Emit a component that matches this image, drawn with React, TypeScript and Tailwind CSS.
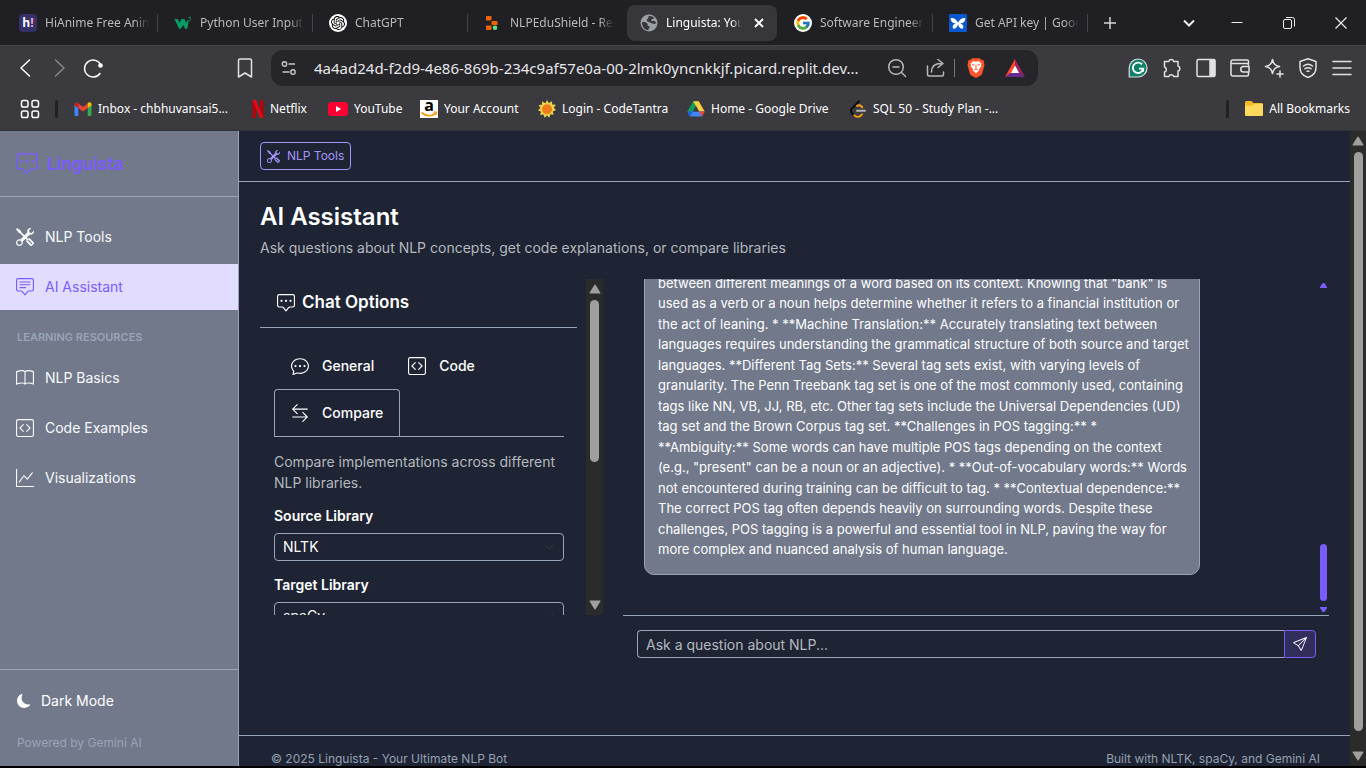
import type { ReactNode } from "react";
import {
  BsArrowLeftRight,
  BsBook,
  BsChatDots,
  BsChatSquareDots,
  BsChatSquareText,
  BsCodeSquare,
  BsGraphUp,
  BsMoonFill,
  BsSend,
  BsTools,
} from "react-icons/bs";
import { FcGoogle } from "react-icons/fc";
import { SiOpenai } from "react-icons/si";

/* ---------- browser icons ---------- */

function HiAnimeIcon() {
  return (
    <span className="flex h-[18px] w-[18px] items-center justify-center rounded bg-[#35306a] font-['Open_Sans',sans-serif] text-xs leading-none font-bold text-white">
      h<span className="text-[#f5a3d8]">!</span>
    </span>
  );
}

function W3Icon() {
  return (
    <svg viewBox="0 0 20 18" className="h-[18px] w-5" fill="none">
      <path d="M0.4 4.5h4l1.8 4.2 2-4.2h3.600l1.600 4.400 1.200-2.600h1.800l-1.600 9h-2.400l-2.200-4.200-2.600 4.200H5.600z" fill="#0a9b62" />
      <path d="M16 2.600h2.600l-1.200 1.600c1.400.1 1.600 2.200-.2 2.400-.6 0-1-.2-1.300-.6" stroke="#0a9b62" strokeWidth="0.9" />
    </svg>
  );
}

function ChatGptIcon() {
  return (
    <span className="flex h-[18px] w-[18px] items-center justify-center rounded-full bg-white text-black">
      <SiOpenai size={14} />
    </span>
  );
}

function ReplitIcon() {
  return (
    <svg viewBox="0 0 18 18" className="h-[18px] w-[18px]">
      <rect x="2" y="2" width="5.5" height="4.5" rx="0.8" fill="#f26207" />
      <rect x="7.5" y="7" width="6" height="4" rx="0.8" fill="#f26207" />
      <rect x="2" y="11.5" width="5.5" height="4.5" rx="0.8" fill="#f26207" />
      <circle cx="11" cy="13.7" r="2.3" fill="#5fe08a" />
    </svg>
  );
}

function GlobeIcon() {
  return (
    <svg viewBox="0 0 18 18" className="h-[18px] w-[18px]">
      <circle cx="9" cy="9" r="8.500" fill="#9aa0a6" />
      <path
        d="M2 8.200c2.400-.4 4.600.2 5.400 1.600.6 1-.2 2.300 1.200 2.400 1.800.1 1.400 1.600 0 2.400l-.2 1.600C4.800 16 2 13 2 8.200zM8.400 2.200c2.400-.6 4.400.2 5.800 1.800-.6 1.600-2.400.6-3 1.800-.7 1.200 1 1.400 2.400 1.300 1.200 0 2 .6 2.400 1.900-1.400 2-3.600.6-5.200-.2C9.200 8 6.600 7.600 6.800 5.900c.2-1.300 2.200-1.200 1.600-3.700z"
        fill="#37363b"
      />
    </svg>
  );
}

function GoogleIcon() {
  return (
    <span className="flex h-[18px] w-[18px] items-center justify-center rounded-full bg-white">
      <FcGoogle size={16} />
    </span>
  );
}

function GeminiDevIcon() {
  return (
    <svg viewBox="0 0 18 18" className="h-[18px] w-[18px]">
      <rect width="18" height="18" rx="1" fill="#0b57d0" />
      <path d="M9 8.600C7.500 5 4.500 3.500 1.800 4c-.2 3.400 2 5.600 5.200 5.400-3 .6-4 2.600-3 5.200 3 .5 4.600-1.600 5-4.600.4 3 2 5.100 5 4.600 1-2.600 0-4.600-3-5.200 3.200.2 5.400-2 5.200-5.400C13.500 3.500 10.500 5 9 8.600z" fill="#fff" />
    </svg>
  );
}

function GmailIcon() {
  return (
    <svg viewBox="0 0 18 14" className="h-[14px] w-[18px]">
      <path d="M0.500 2.500v10.200c0 .7.500 1.200 1.200 1.200h2.600V6z" fill="#4285f4" />
      <path d="M17.500 2.500v10.200c0 .7-.5 1.200-1.200 1.200h-2.600V6z" fill="#34a853" />
      <path d="M4.300 6v-4.600L9 5l4.700-3.600V6L9 9.600z" fill="#ea4335" />
      <path d="M0.500 2.400C.5.300 2.700-.4 4.300 1.100V6L.5 3.400z" fill="#c5221f" />
      <path d="M17.500 2.400c0-2.100-2.200-2.800-3.800-1.300V6l3.800-2.600z" fill="#fbbc04" />
    </svg>
  );
}

function NetflixIcon() {
  return (
    <svg viewBox="0 0 12 18" className="h-[18px] w-3">
      <path d="M0.500 0h3.500v18l-3.500.2zM8 0h3.500v18.200L8 18z" fill="#b1060f" />
      <path d="M0.500 0H4l7.500 18.200L8 18z" fill="#e50914" />
    </svg>
  );
}

function YouTubeIcon() {
  return (
    <svg viewBox="0 0 20 14" className="h-[14px] w-5">
      <rect width="20" height="14" rx="3.500" fill="#ff0033" />
      <path d="M8 4l5.200 3L8 10z" fill="#fff" />
    </svg>
  );
}

function AmazonIcon() {
  return (
    <span className="relative flex h-[18px] w-[18px] justify-center bg-white font-['Open_Sans',sans-serif] text-base leading-[11px] font-bold text-black">
      a
      <svg viewBox="0 0 18 18" className="absolute inset-0" fill="none">
        <path d="M1.500 12.500c4.500 4 10 4 14 1" stroke="#ff9900" strokeWidth="1.800" />
        <path d="M13.500 12.200h3l-.6 3" stroke="#ff9900" strokeWidth="1.200" />
      </svg>
    </span>
  );
}

function SunIcon() {
  return (
    <svg viewBox="0 0 18 18" className="h-[18px] w-[18px]">
      <path d="M9 0l1.800 3L14 1.200l.2 3.400 3.600.2-2 3 2.200 2.200-3.200 1.400.8 3.300-3.200-.4L11.300 17.800 9 15.600l-2.400 2.200-1.200-3.200-3.300.5.9-3.300-3-1.500 2.400-2.300L.6 5l3.400-.2.100-3.600 3.200 2z" fill="#e8d44c" />
      <circle cx="9" cy="9.200" r="5" fill="#f07c1b" />
    </svg>
  );
}

function DriveIcon() {
  return (
    <svg viewBox="0 0 18 16" className="h-4 w-[18px]">
      <path d="M6.200.3h5.600L6 10.500H.3z" fill="#0f9d58" />
      <path d="M6.200.3h5.600l5.900 10.200H12z" fill="#ffcd40" />
      <path d="M.3 10.500h17.400L15 15.600H3z" fill="#4285f4" />
      <path d="M12 10.500h5.700L15 15.600z" fill="#ea4335" />
      <path d="M.3 10.500H6L3 15.600z" fill="#1967d2" />
      <path d="M9 5.300l3 5.200H6z" fill="#3b3a3f" />
    </svg>
  );
}

function LeetCodeIcon() {
  return (
    <svg viewBox="0 0 18 18" className="h-[18px] w-[18px]" fill="none" strokeWidth="2" strokeLinecap="round">
      <path d="M10 1.200L2.800 8.600c-1.200 1.200-1.200 2.800 0 4.200l1.600 1.800" stroke="#0c0c0c" />
      <path d="M5.400 15.400c1.800 1.900 4.600 1.900 6.400.2l1.200-1.200M8 6c1.400-1 3-.8 4.200.2l1 1" stroke="#ffa116" />
      <path d="M8 10.800h8" stroke="#b3b3b3" />
    </svg>
  );
}

function FolderIcon() {
  return (
    <svg viewBox="0 0 18 15" className="h-[15px] w-[18px]">
      <path d="M0 1.500C0 .7.700 0 1.500 0h5l2 2H16.500c.8 0 1.500.7 1.500 1.500v10c0 .8-.7 1.500-1.500 1.500h-15C.7 15 0 14.300 0 13.500z" fill="#f5b921" />
      <path d="M0 4.500h7.500l1.800-1.500H18v10.500c0 .8-.7 1.500-1.500 1.500h-15C.7 15 0 14.300 0 13.500z" fill="#ffd95e" />
    </svg>
  );
}

function BraveIcon() {
  return (
    <svg viewBox="0 0 18 20.500" className="h-5 w-[18px]">
      <path d="M5 .3h8l1.600 1.800 1.500-.2L17.600 4l-.5 1.500.6 1.800-2.300 8.500c-.3 1-1 1.600-2 2.300L9 20.500l-4.400-2.400c-1-.7-1.700-1.300-2-2.300L.3 7.300l.6-1.800L.4 4l1.500-2.100 1.500.2z" fill="#fb542b" />
      <path d="M9 3.800l3-.6 2.600 2.700-.5 1.300.4 1.300-2.500 3 .4 1.300-1.300.9L9 16l-2.100-2.300-1.300-.9.400-1.300-2.500-3 .4-1.300-.5-1.300L6 3.200z" fill="#fff" />
      <path d="M5 6.600l2.600.7M13 6.600l-2.600.7M9 7v4.200M7.200 11.400L9 12.400l1.800-1" stroke="#fb542b" strokeWidth="1" fill="none" />
    </svg>
  );
}

function BatIcon() {
  return (
    <svg viewBox="0 0 20 18" className="h-[18px] w-5">
      <path d="M10 0L0 18l6-4 4-7z" fill="#ff4724" />
      <path d="M10 0l10 18-6-4-4-7z" fill="#9e1f63" />
      <path d="M0 18h20l-6-4H6z" fill="#662d91" />
      <path d="M10 6.500l4.200 7.500H5.800z" fill="#fff" />
    </svg>
  );
}

function GrammarlyIcon() {
  return (
    <svg viewBox="0 0 20 20" className="h-5 w-5" fill="none">
      <path d="M10 1a9 9 0 1 1 0 18H1.200V10A9 9 0 0 1 10 1z" fill="#11806a" stroke="#d8dcdc" strokeWidth="1.200" />
      <path d="M14 6.400A5.200 5.200 0 1 0 15.200 10.600H11M15.200 10.600l-.2 3" stroke="#fff" strokeWidth="1.900" />
    </svg>
  );
}

function Line({ children }: { children: ReactNode }) {
  return (
    <svg viewBox="0 0 20 20" className="h-5 w-5" fill="none" stroke="currentColor" strokeWidth="1.500" strokeLinecap="round" strokeLinejoin="round">
      {children}
    </svg>
  );
}

/* ---------- browser chrome ---------- */

const tabs = [
  { title: "HiAnime Free Anime", icon: <HiAnimeIcon /> },
  { title: "Python User Input", icon: <W3Icon /> },
  { title: "ChatGPT", icon: <ChatGptIcon /> },
  { title: "NLPEduShield - Rep", icon: <ReplitIcon /> },
  { title: "Linguista: Your", icon: <GlobeIcon />, active: true },
  { title: "Software Engineer", icon: <GoogleIcon /> },
  { title: "Get API key | Goog", icon: <GeminiDevIcon /> },
];

function TabStrip() {
  return (
    <div className="flex h-[45px] shrink-0 items-center bg-[#201f24] pl-[3px] text-[#b9b8bc]">
      {tabs.map((tab, i) => (
        <div key={tab.title} className="flex w-[155px] shrink items-center">
          <button
            type="button"
            className={
              tab.active
                ? "ml-1 flex h-9 min-w-0 flex-1 items-center gap-2 rounded-lg bg-[#37363b] px-[13px] text-white"
                : "flex h-9 min-w-0 flex-1 items-center gap-2 pr-2 pl-4"
            }
          >
            <span className="flex w-[18px] shrink-0 justify-center">{tab.icon}</span>
            <span className="min-w-0 flex-1 overflow-hidden text-left text-xs whitespace-nowrap [mask-image:linear-gradient(to_right,black_86%,transparent)]">
              {tab.title}
            </span>
            {tab.active && (
              <svg viewBox="0 0 10 10" className="ml-1 h-[10px] w-[10px] shrink-0" stroke="#fff" strokeWidth="1.800">
                <path d="M1 1l8 8M9 1L1 9" />
              </svg>
            )}
          </button>
          <span className={i === 3 || i === 4 ? "h-[18px] w-px" : "h-[18px] w-px bg-[#45444a]"} />
        </div>
      ))}
      <button type="button" aria-label="New tab" className="ml-4 text-[#d6d5d8]">
        <svg viewBox="0 0 12 12" className="h-3 w-3" stroke="currentColor" strokeWidth="1.500">
          <path d="M6 0v12M0 6h12" />
        </svg>
      </button>
      <div className="ml-auto flex items-center gap-10 pr-[19px] text-[#ececee]">
        <button type="button" aria-label="Search tabs" className="mr-[-4px]">
          <svg viewBox="0 0 12 12" className="h-3 w-3" fill="none" stroke="currentColor" strokeWidth="2">
            <path d="M1 3.500l5 5 5-5" />
          </svg>
        </button>
        <button type="button" aria-label="Minimize">
          <svg viewBox="0 0 12 12" className="h-3 w-3" stroke="currentColor">
            <path d="M0.500 5.500h11" />
          </svg>
        </button>
        <button type="button" aria-label="Restore">
          <svg viewBox="0 0 12 12" className="h-3 w-3" fill="none" stroke="currentColor">
            <rect x="0.500" y="2.500" width="8" height="9" rx="1.500" />
            <path d="M3 .5h6.500a2 2 0 0 1 2 2V9.500" />
          </svg>
        </button>
        <button type="button" aria-label="Close">
          <svg viewBox="0 0 12 12" className="h-3 w-3" stroke="currentColor" strokeWidth="1.200">
            <path d="M.5.5l11 11M11.500.5l-11 11" />
          </svg>
        </button>
      </div>
    </div>
  );
}

function Toolbar() {
  return (
    <div className="flex h-[46px] shrink-0 items-center border-t border-[#45444a] bg-[#3b3a3f] pr-[14px] pb-px pl-4 text-[#e2e2e4]">
      <button type="button" aria-label="Back" className="text-white">
        <Line><path d="M13.500 2L5 10l8.500 8" /></Line>
      </button>
      <button type="button" aria-label="Forward" className="ml-[14px] text-[#88878c]">
        <Line><path d="M5.500 2l8.500 8-8.500 8" /></Line>
      </button>
      <button type="button" aria-label="Reload" className="ml-[13px] text-white">
        <Line>
          <path d="M17 15.500A8.500 8.500 0 1 1 17.800 7" />
          <circle cx="17.500" cy="7.500" r="1.600" fill="currentColor" />
        </Line>
      </button>
      <button type="button" aria-label="Bookmark" className="ml-[132px]">
        <Line><path d="M3.500 2.500q0-1.500 1.500-1.500h10q1.500 0 1.500 1.500v16.500l-6.500-4-6.500 4z" /></Line>
      </button>
      <div className="ml-4 flex h-9 w-[767px] items-center rounded-xl bg-[#26252a] pr-[13px] pl-[9px]">
        <svg viewBox="0 0 16 16" className="h-4 w-[18px] shrink-0" fill="none" stroke="#c7c6ca" strokeWidth="1.400">
          <circle cx="3.500" cy="4" r="2.200" />
          <path d="M7.500 4H14M1.500 12H8.500" />
          <circle cx="12" cy="12" r="2.200" />
        </svg>
        <input
          aria-label="Address"
          className="ml-4 min-w-0 flex-1 bg-transparent text-[15px] text-[#e6e6e8] outline-none"
          defaultValue="4a4ad24d-f2d9-4e86-869b-234c9af57e0a-00-2lmk0yncnkkjf.picard.replit.dev..."
        />
        <div className="flex items-center text-[#b8b7bb]">
          <Line>
            <circle cx="9" cy="9" r="7.300" />
            <path d="M6 9h6M14.500 14.500l4 4" />
          </Line>
          <span className="ml-[19px] flex">
            <Line>
              <path d="M1.500 8v8.500q0 1.500 1.500 1.500h13q1.500 0 1.500-1.500V14M5.500 14c0-5.500 3-8.500 9.500-8.500M12 1.500l5 4-5 4" />
            </Line>
          </span>
          <span className="ml-2 h-[18px] w-px bg-[#77767b]" />
          <span className="ml-3"><BraveIcon /></span>
          <span className="ml-5"><BatIcon /></span>
        </div>
      </div>
      <div className="ml-auto flex items-center gap-[14px]">
        <GrammarlyIcon />
        <Line>
          <path d="M2.500 3.500h4.200a2.600 2.600 0 0 1 5 0H16V8a2.600 2.600 0 0 1 0 5v5.500h-4.300a2.600 2.600 0 0 0-4.900 0H2.500V14a2.600 2.600 0 0 0 0-5z" />
        </Line>
        <Line>
          <rect x="1" y="1.500" width="18" height="17" rx="1.500" />
          <path d="M14 2h4.500v16H14z" fill="currentColor" />
        </Line>
        <Line>
          <path d="M18.500 6V3.500q0-1.500-1.500-1.500H3Q1 2 1 4v12q0 2 2 2h14q1.500 0 1.500-1.500V14M1.200 5.500H17q1.500 0 1.500 1.500M19 8.500h-5.500a2.700 2.700 0 0 0 0 5.500H19z" />
        </Line>
        <Line>
          <path d="M8.500 1.500c1 4.500 2.500 6 7 7-4.500 1-6 2.500-7 7-1-4.500-2.500-6-7-7 4.500-1 6-2.500 7-7zM16 13v6M13 16h6" />
        </Line>
        <Line>
          <path d="M10 .8l8 2.700v6c0 5-3.500 8.500-8 10-4.500-1.500-8-5-8-10v-6zM5.500 8c2.700-2 6.300-2 9 0M7 10.700c2-1.400 4-1.400 6 0M9 13.300q1-.8 2 0" />
        </Line>
        <Line>
          <path d="M1 3.500h18M1 10h18M1 16.500h18" />
        </Line>
      </div>
    </div>
  );
}

const bookmarks = [
  { title: "Inbox - chbhuvansai5...", icon: <GmailIcon />, box: "w-[178px]" },
  { title: "Netflix", icon: <NetflixIcon />, box: "w-[76px]" },
  { title: "YouTube", icon: <YouTubeIcon />, box: "w-[92px]" },
  { title: "Your Account", icon: <AmazonIcon />, box: "w-[118px]" },
  { title: "Login - CodeTantra", icon: <SunIcon />, box: "w-[149px]" },
  { title: "Home - Google Drive", icon: <DriveIcon />, box: "w-[162px]" },
  { title: "SQL 50 - Study Plan -...", icon: <LeetCodeIcon />, box: "w-[160px]" },
];

function BookmarksBar() {
  return (
    <div className="flex h-10 shrink-0 items-center border-b border-[#323135] bg-[#3b3a3f] pr-4 pb-1 pl-5 text-xs whitespace-nowrap text-white">
      <Line>
        <rect x="1.500" y="1.500" width="6.500" height="6.500" rx="1.800" />
        <rect x="12" y="1.500" width="6.500" height="6.500" rx="1.800" />
        <rect x="1.500" y="12" width="6.500" height="6.500" rx="1.800" />
        <rect x="12" y="12" width="6.500" height="6.500" rx="1.800" />
      </Line>
      <span className="ml-[15px] h-[18px] w-[3px] rounded-full bg-[#212025]" />
      <nav className="ml-4 flex">
        {bookmarks.map((b) => (
          <a key={b.title} href="#" className={`flex items-center gap-[6px] ${b.box}`}>
            <span className="flex shrink-0 justify-center">{b.icon}</span>
            {b.title}
          </a>
        ))}
      </nav>
      <span className="ml-auto h-[18px] w-[3px] rounded-full bg-[#212025]" />
      <a href="#" className="ml-4 flex items-center gap-[6px]">
        <FolderIcon />
        All Bookmarks
      </a>
    </div>
  );
}

/* ---------- scrollbars ---------- */

function Arrow({ down = false }: { down?: boolean }) {
  return (
    <svg viewBox="0 0 12 10" className="h-[10px] w-3 shrink-0" fill="#9f9f9f">
      {down ? <path d="M1.200.5h9.600q1 0 .5 1L6.700 9q-.7 1-1.400 0L.7 1.500q-.5-1 .5-1z" /> : <path d="M1.200 9.500h9.600q1 0 .5-1L6.700 1q-.7-1-1.400 0L.7 8.500q-.5 1 .5 1z" />}
    </svg>
  );
}

/* ---------- application ---------- */

function NavItem({ icon, label, active = false }: { icon: ReactNode; label: string; active?: boolean }) {
  return (
    <a
      href="#"
      className={
        active
          ? "flex h-[46px] items-center gap-[11px] bg-[#e2dcff] pl-4 text-sm text-[#7a5cfa]"
          : "flex h-[46px] items-center gap-[11px] pl-4 text-sm text-[#f8fafc]"
      }
    >
      {icon}
      {label}
    </a>
  );
}

function Sidebar() {
  return (
    <aside className="flex w-[239px] shrink-0 flex-col border-r border-[#9aa4b8] bg-[#71798b]">
      <div className="flex h-[66px] shrink-0 items-center gap-[9px] border-b border-[#9aa4b8] pl-4 text-[#7a5cfa]">
        <BsChatSquareDots size={22} />
        <span className="text-[17px] leading-6 font-bold">Linguista</span>
      </div>
      <nav className="flex flex-1 flex-col gap-1 pt-[17px]">
        <NavItem icon={<BsTools size={18} />} label="NLP Tools" />
        <NavItem icon={<BsChatSquareText size={18} />} label="AI Assistant" active />
        <h2 className="flex h-[37px] items-end pb-[6px] pl-[17px] text-[11px] leading-4 font-semibold text-[#9aa4b8]">
          LEARNING RESOURCES
        </h2>
        <NavItem icon={<BsBook size={18} />} label="NLP Basics" />
        <NavItem icon={<BsCodeSquare size={18} />} label="Code Examples" />
        <NavItem icon={<BsGraphUp size={18} />} label="Visualizations" />
      </nav>
      <div className="flex flex-col gap-[22px] border-t border-[#9aa4b8] px-[17px] pt-[21px] pb-[13px]">
        <button type="button" className="flex items-center gap-[10px] text-sm leading-5 text-white">
          <BsMoonFill size={14} />
          Dark Mode
        </button>
        <p className="text-xs leading-5 text-[#9aa4b8]">Powered by Gemini AI</p>
      </div>
    </aside>
  );
}

function LibrarySelect({ id, label, value }: { id: string; label: string; value: string }) {
  return (
    <div className="flex flex-col gap-[7px]">
      <label htmlFor={id} className="text-sm leading-5 font-semibold text-white">
        {label}
      </label>
      <div className="grid items-center">
        <select
          id={id}
          defaultValue={value}
          className="col-start-1 row-start-1 h-7 w-full appearance-none rounded-sm border border-[#9aa4b8] bg-transparent px-2 text-sm text-white"
        >
          <option>NLTK</option>
          <option>spaCy</option>
        </select>
        <svg viewBox="0 0 10 6" className="pointer-events-none col-start-1 row-start-1 mr-[10px] h-[6px] w-[10px] justify-self-end" fill="none" stroke="#343a40">
          <path d="M1 1l4 4 4-4" />
        </svg>
      </div>
    </div>
  );
}

function ChatOptions() {
  return (
    <section className="flex h-[336px] w-[343px] shrink-0 overflow-hidden">
      <div className="min-w-0 flex-1 pr-[9px]">
        <h2 className="flex h-[49px] items-center gap-[7px] border-b border-[#9aa4b8] pl-[17px] text-[17px] font-semibold text-white">
          <BsChatSquareDots size={18} />
          Chat Options
        </h2>
        <div className="pr-[13px] pl-[14px]">
          <div role="tablist" className="mt-[14px] flex flex-wrap border-b border-[#9aa4b8] text-sm font-medium text-white">
            <button type="button" role="tab" className="flex h-[47px] items-center gap-[13px] px-[17px]">
              <BsChatDots size={18} />
              General
            </button>
            <button type="button" role="tab" className="flex h-[47px] items-center gap-[13px] px-[17px]">
              <BsCodeSquare size={18} />
              Code
            </button>
            <button
              type="button"
              role="tab"
              aria-selected="true"
              className="flex h-[47px] items-center gap-[13px] rounded-t-sm border border-b-0 border-[#9aa4b8] px-4"
            >
              <BsArrowLeftRight size={18} />
              Compare
            </button>
          </div>
          <p className="mt-[14px] text-sm leading-[21px] text-[#b4b8bf]">
            Compare implementations across different NLP libraries.
          </p>
          <div className="mt-[13px] flex flex-col gap-[14px]">
            <LibrarySelect id="source-library" label="Source Library" value="NLTK" />
            <LibrarySelect id="target-library" label="Target Library" value="spaCy" />
          </div>
        </div>
      </div>
      <div className="flex w-[17px] flex-col items-center justify-between bg-[#2b2b2b] py-[5px]">
        <Arrow />
        <div className="mt-[6px] h-[162px] w-[9px] rounded-full bg-[#9f9f9f]" />
        <div className="flex-1" />
        <Arrow down />
      </div>
    </section>
  );
}

const answer = `between different meanings of a word based on its context. Knowing that "bank" is
used as a verb or a noun helps determine whether it refers to a financial institution or
the act of leaning. * **Machine Translation:** Accurately translating text between
languages requires understanding the grammatical structure of both source and target
languages. **Different Tag Sets:** Several tag sets exist, with varying levels of
granularity. The Penn Treebank tag set is one of the most commonly used, containing
tags like NN, VB, JJ, RB, etc. Other tag sets include the Universal Dependencies (UD)
tag set and the Brown Corpus tag set. **Challenges in POS tagging:** *
**Ambiguity:** Some words can have multiple POS tags depending on the context
(e.g., "present" can be a noun or an adjective). * **Out-of-vocabulary words:** Words
not encountered during training can be difficult to tag. * **Contextual dependence:**
The correct POS tag often depends heavily on surrounding words. Despite these
challenges, POS tagging is a powerful and essential tool in NLP, paving the way for
more complex and nuanced analysis of human language.`;

function ChatPanel() {
  return (
    <section className="flex min-w-0 flex-1 flex-col">
      <div className="flex h-[336px] overflow-hidden">
        <div className="flex min-w-0 flex-1 flex-col justify-end pb-10 pl-[21px]">
          <p className="w-[556px] shrink-0 rounded-[10px] border border-[#9aa4b8] bg-[#71798b] py-[14px] pr-1 pl-[13px] text-[13px] leading-[1.58] whitespace-pre-line text-white">
            {answer}
          </p>
        </div>
        <div className="flex w-[11px] flex-col items-center pt-1 pb-[3px]">
          <svg viewBox="0 0 7 5" className="h-[5px] w-[7px]" fill="#7a5cfa">
            <path d="M2.500 0h2L7 4v1H0V4z" />
          </svg>
          <div className="mt-auto h-[57px] w-[7px] rounded-full bg-[#7a5cfa]" />
          <svg viewBox="0 0 7 5" className="mt-[6px] h-[5px] w-[7px]" fill="#7a5cfa">
            <path d="M0 0h7v1L4.500 5h-2L0 1z" />
          </svg>
        </div>
      </div>
      <form className="flex border-t border-[#9aa4b8] py-[14px] pr-[13px] pl-[14px]" onSubmit={(e) => e.preventDefault()}>
        <input
          aria-label="Ask a question about NLP"
          placeholder="Ask a question about NLP..."
          className="h-7 min-w-0 flex-1 rounded-l-sm border border-r-0 border-[#9aa4b8] bg-transparent px-2 text-sm text-white outline-none placeholder:text-[#b4b8bf]"
        />
        <button
          type="submit"
          aria-label="Send"
          className="flex h-7 w-8 items-center justify-center rounded-r-sm border border-[#7a5cfa] bg-[#312e5c] text-white"
        >
          <BsSend size={14} />
        </button>
      </form>
    </section>
  );
}

function Main() {
  return (
    <div className="flex min-w-0 flex-1 flex-col bg-[#1e2433]">
      <header className="flex h-[51px] shrink-0 items-center border-b border-[#9aa4b8] pl-[21px]">
        <button type="button" className="flex h-7 items-center gap-[7px] rounded-sm border border-[#a394fb] px-[6px] text-xs text-[#a394fb]">
          <BsTools size={13} />
          NLP Tools
        </button>
      </header>
      <main className="flex-1 px-[21px] pt-5">
        <h1 className="text-2xl leading-[30px] font-semibold text-white">AI Assistant</h1>
        <p className="mt-[6px] text-sm leading-5 text-[#b4b8bf]">
          Ask questions about NLP concepts, get code explanations, or compare libraries
        </p>
        <div className="mt-[21px] flex gap-5">
          <ChatOptions />
          <ChatPanel />
        </div>
      </main>
      <footer className="flex h-[31px] shrink-0 items-start justify-between overflow-hidden border-t border-[#9aa4b8] pt-[13px] pr-[30px] pl-8 text-xs leading-5 text-[#94a0b4]">
        <span>© 2025 Linguista - Your Ultimate NLP Bot</span>
        <span>Built with NLTK, spaCy, and Gemini AI</span>
      </footer>
    </div>
  );
}

export default function App() {
  return (
    <div className="flex h-screen flex-col overflow-hidden bg-black pb-[2px] font-['Noto_Sans',sans-serif]">
      <TabStrip />
      <Toolbar />
      <BookmarksBar />
      <div className="flex min-h-0 flex-1 font-['Inter',sans-serif]">
        <Sidebar />
        <Main />
        <div className="flex w-4 shrink-0 flex-col items-center bg-[#2b2b2b] py-[5px]">
          <Arrow />
          <div className="mt-[6px] mb-5 w-[9px] flex-1 rounded-full bg-[#9f9f9f]" />
          <Arrow down />
        </div>
      </div>
    </div>
  );
}
